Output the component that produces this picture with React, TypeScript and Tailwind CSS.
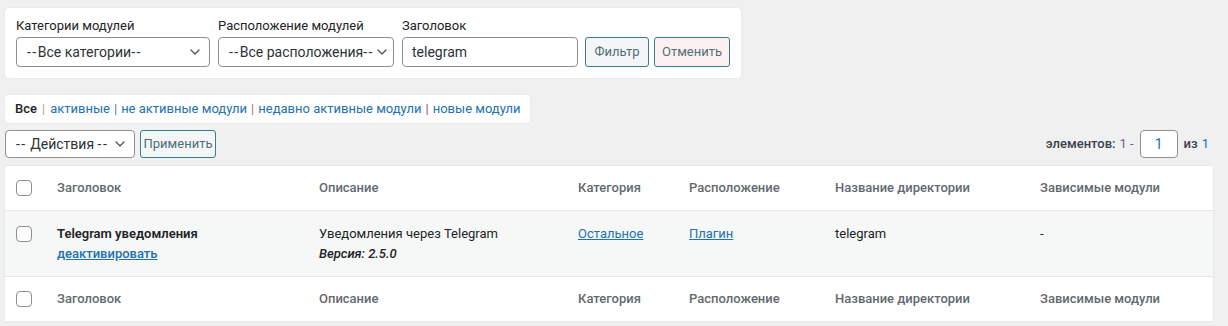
import { ChevronDown } from "lucide-react";

function Dashes({ text }: { text: string }) {
  const parts = text.split("--");
  return (
    <>
      {parts.map((p, i) => (
        <span key={i}>
          {i > 0 && <span className="tracking-[1.5px]">--</span>}
          {p}
        </span>
      ))}
    </>
  );
}

function Select({ label, width, h = "h-[30px]", text = "text-[14px]" }: { label: string; width: string; h?: string; text?: string }) {
  return (
    <div className={`${width} ${h} ${text} flex items-center justify-between rounded-[4px] border border-[#8c8f94] bg-white pl-[10px] pr-[6px] text-[#2c3338]`}>
      <span className="whitespace-nowrap"><Dashes text={label} /></span>
      <ChevronDown size={16} strokeWidth={2} className="shrink-0 text-[#50575e]" />
    </div>
  );
}

function Checkbox() {
  return <div className="h-4 w-4 rounded-[4px] border border-[#8c8f94] bg-white" />;
}

const cols = "grid grid-cols-[52px_262px_259px_111px_146px_205px_1fr]";

function HeadRow({ border }: { border: string }) {
  return (
    <div className={`${cols} h-[45px] items-center text-[#646970] font-medium ${border}`}>
      <div className="pl-[11px]"><Checkbox /></div>
      <div>Заголовок</div>
      <div>Описание</div>
      <div>Категория</div>
      <div>Расположение</div>
      <div>Название директории</div>
      <div>Зависимые модули</div>
    </div>
  );
}

export default function App() {
  return (
    <div className="min-h-[326px] bg-[#f0f0f1] pl-[5px] pt-2 font-['Roboto',sans-serif] text-[13px] text-[#3c434a]">
      <div className="w-[1208px]">
        <div className="flex h-[70px] w-[736px] items-end gap-2 rounded-[4px] bg-white px-[11px] pb-[11px] shadow-[0_0_2px_rgba(0,0,0,0.08)]">
          <div>
            <div className="mb-[4px] leading-[15px] text-[#1d2327]">Категории модулей</div>
            <Select label="--Все категории--" width="w-[194px]" />
          </div>
          <div>
            <div className="mb-[4px] leading-[15px] text-[#1d2327]">Расположение модулей</div>
            <Select label="--Все расположения--" width="w-[176px]" />
          </div>
          <div>
            <div className="mb-[4px] leading-[15px] text-[#1d2327]">Заголовок</div>
            <div className="flex h-[30px] w-[176px] items-center rounded-[4px] border border-[#8c8f94] bg-white px-[9px] text-[14px] text-[#2c3338]">telegram</div>
          </div>
          <div className="ml-[-1px] flex gap-[5px]">
            <button className="h-[30px] w-[64px] rounded-[3px] border border-[#387f8c] bg-[#f3f5f6] text-[13px] text-[#4f6f78]">Фильтр</button>
            <button className="h-[30px] w-[76px] rounded-[3px] border border-[#387f8c] bg-[#fcf0f1] text-[13px] text-[#4f6f78]">Отменить</button>
          </div>
        </div>

        <div className="mt-[17px] flex h-[28px] w-[525px] items-center rounded-[4px] bg-white pl-[10px] shadow-[0_0_2px_rgba(0,0,0,0.08)] whitespace-nowrap">
          <span className="font-medium text-[#1d2327]">Все</span>
          <span className="mx-[5px] text-[#c9a36f]">|</span>
          <span className="text-[#2271b1]">активные</span>
          <span className="mx-[4px] text-[#3582c4]">|</span>
          <span className="text-[#2271b1]">не активные модули</span>
          <span className="mx-[4px] text-[#c46a6a]">|</span>
          <span className="text-[#2271b1]">недавно активные модули</span>
          <span className="mx-[4px] text-[#9b3f8a]">|</span>
          <span className="text-[#2271b1]">новые модули</span>
        </div>

        <div className="mt-[7px] flex h-[28px] items-center">
          <Select label="-- Действия --" width="w-[130px]" h="h-[28px]" text="text-[14px]" />
          <button className="ml-[5px] h-[28px] w-[76px] rounded-[3px] border border-[#387f8c] bg-[#f3f5f6] text-[13px] text-[#4f6f78]">Применить</button>
          <div className="ml-auto flex items-center pr-[4px]">
            <span className="font-medium text-[#3c434a]">элементов:</span>
            <span className="ml-[4px] text-[#7a5a8c]">1 -</span>
            <div className="ml-[6px] flex h-[28px] w-[38px] items-center justify-center rounded-[4px] border border-[#8c8f94] bg-white text-[14px] text-[#2271b1]">1</div>
            <span className="ml-[6px] font-medium text-[#3c434a]">из</span>
            <span className="ml-[4px] text-[#2271b1]">1</span>
          </div>
        </div>

        <div className="mt-[8px] bg-white shadow-[0_0_2px_rgba(0,0,0,0.1)]">
          <HeadRow border="border-b border-[#e6e6e6]" />
          <div className={`${cols} h-[65px] items-start bg-[#f6f7f7] pt-[13px] leading-[20px] text-[#1d2327]`}>
            <div className="pl-[11px] pt-[2px]"><Checkbox /></div>
            <div>
              <div className="font-semibold">Telegram уведомления</div>
              <div className="font-medium text-[#2271b1] underline">деактивировать</div>
            </div>
            <div>
              <div>Уведомления через Telegram</div>
              <div className="font-medium italic">Версия: 2.5.0</div>
            </div>
            <div className="text-[#2271b1] underline">Остальное</div>
            <div className="text-[#2271b1] underline">Плагин</div>
            <div>telegram</div>
            <div>-</div>
          </div>
          <HeadRow border="border-t border-[#e6e6e6]" />
        </div>
      </div>
    </div>
  );
}
